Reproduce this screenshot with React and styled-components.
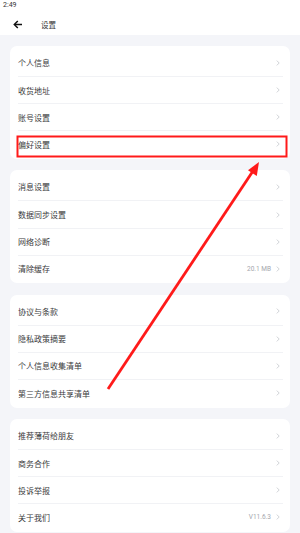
import React from "react";
import styled, { createGlobalStyle } from "styled-components";

const Global = createGlobalStyle`
  html, body { margin: 0; padding: 0; background: #f4f5f9; }
  body { font-family: "Noto Sans CJK SC", "Noto Sans", sans-serif; -webkit-font-smoothing: antialiased; }
  * { box-sizing: border-box; }
`;

const Screen = styled.div`
  position: relative;
  width: 300px;
  height: 533px;
  overflow: hidden;
  background: #f4f5f9;
`;

const StatusBar = styled.div`
  height: 14px;
  background: #fff;
  padding: 0 0 0 3px;
  font-size: 7px;
  line-height: 11px;
  color: #333;
  font-family: "Roboto", "Noto Sans", sans-serif;
`;

const Header = styled.div`
  height: 21px;
  background: #fff;
  display: flex;
  align-items: center;
  padding-left: 13px;
  gap: 18px;
`;

const Title = styled.span`
  font-size: 7.5px;
  color: #333;
  line-height: 1;
`;

const Content = styled.div`
  display: flex;
  flex-direction: column;
  gap: 11.5px;
  padding: 11px 10px 0;
`;

const Card = styled.div`
  background: #fff;
  border-radius: 7px;
  padding: 3px 0 1.5px;
`;

const Row = styled.div`
  height: 27.1px;
  margin: 0 7px 0 8px;
  display: flex;
  align-items: center;
  border-top: ${(p) => (p.$first ? "none" : "1px solid #f1f2f5")};
`;

const Label = styled.span`
  flex: 1;
  font-size: 8px;
  color: #3a3a3c;
  line-height: 1;
  padding-top: 1px;
`;

const Value = styled.span`
  font-size: 6.5px;
  color: #a4a6ad;
  margin-right: 5px;
  font-family: "Roboto", "Noto Sans", sans-serif;
`;

const Chevron = () => (
  <svg width="4" height="6" viewBox="0 0 4 6" style={{ marginRight: 3 }}>
    <path d="M0.8 0.6 L3.2 3 L0.8 5.4" fill="none" stroke="#c4c6cc" strokeWidth="0.8" />
  </svg>
);

const BackArrow = () => (
  <svg width="10" height="9" viewBox="0 0 10 9">
    <path d="M9 4.5 H2" stroke="#111" strokeWidth="1.5" fill="none" />
    <path d="M4.8 1 L1.3 4.5 L4.8 8" stroke="#111" strokeWidth="1.5" fill="none" strokeLinejoin="miter" />
  </svg>
);

const Overlay = styled.svg`
  position: absolute;
  left: 0;
  top: 0;
  pointer-events: none;
`;

const groups = [
  [["个人信息"], ["收货地址"], ["账号设置"], ["偏好设置"]],
  [["消息设置"], ["数据同步设置"], ["网络诊断"], ["清除缓存", "20.1 MB"]],
  [["协议与条款"], ["隐私政策摘要"], ["个人信息收集清单"], ["第三方信息共享清单"]],
  [["推荐薄荷给朋友"], ["商务合作"], ["投诉举报"], ["关于我们", "V11.6.3"]],
];

export default function App() {
  return (
    <Screen>
      <Global />
      <StatusBar>2:49</StatusBar>
      <Header>
        <BackArrow />
        <Title>设置</Title>
      </Header>
      <Content>
        {groups.map((g, gi) => (
          <Card key={gi}>
            {g.map(([label, value], i) => (
              <Row key={label} $first={i === 0}>
                <Label>{label}</Label>
                {value && <Value>{value}</Value>}
                <Chevron />
              </Row>
            ))}
          </Card>
        ))}
      </Content>
      <Overlay width="300" height="533" viewBox="0 0 300 533">
        <rect x="17.5" y="136.5" width="269" height="20" fill="none" stroke="#ff1a1a" strokeWidth="2" />
        <line x1="108" y1="389" x2="253" y2="171" stroke="#ff1a1a" strokeWidth="2.8" />
        <polygon points="259,162 256.8,176 248,170.2" fill="#ff1a1a" />
      </Overlay>
    </Screen>
  );
}
